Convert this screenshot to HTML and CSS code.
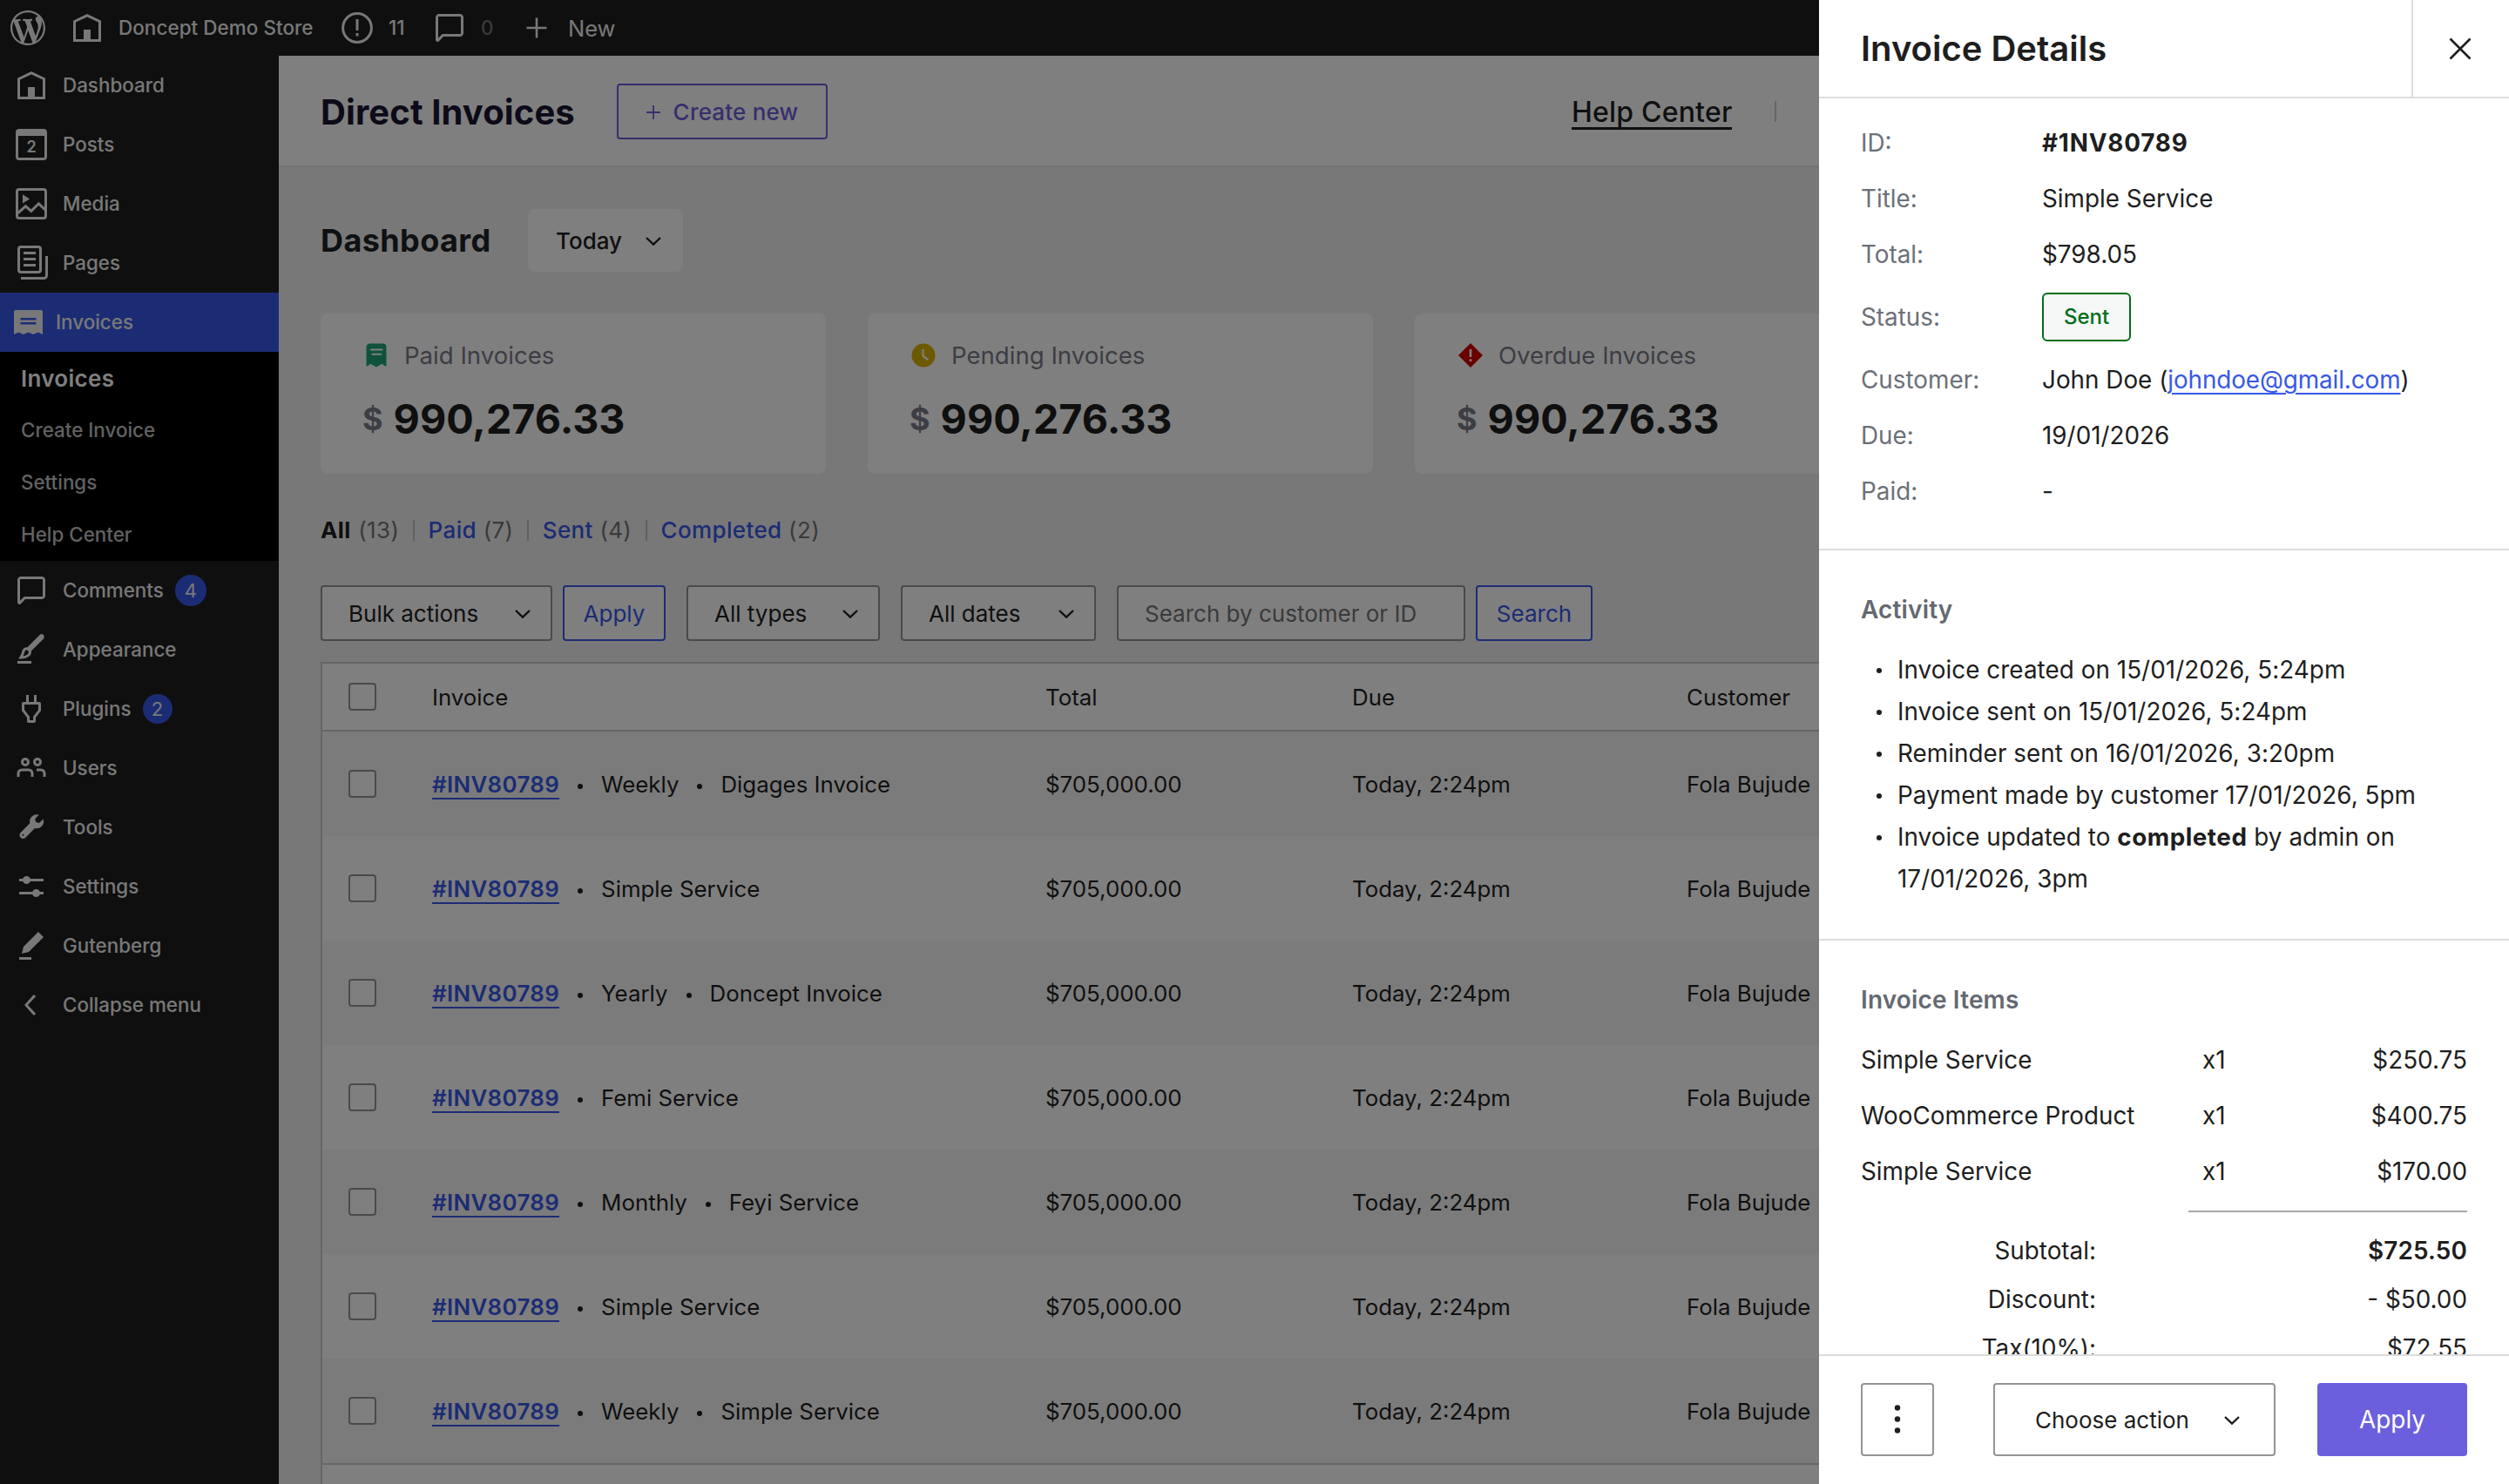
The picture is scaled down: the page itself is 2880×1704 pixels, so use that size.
FILE: index.html
```html
<!DOCTYPE html>
<html lang="en">
<head>
<meta charset="utf-8">
<title>Direct Invoices</title>
<link rel="stylesheet" href="styles.css">
</head>
<body>
<svg class="sprite" width="0" height="0" aria-hidden="true">
  <symbol id="i-home" viewBox="0 0 24 24"><path d="M12 4L4 7.9V20h16V7.9L12 4zm6.5 14.5H14V13h-4v5.5H5.5V8.8L12 5.7l6.5 3.1v9.7z"/></symbol>
  <symbol id="i-comment" viewBox="0 0 24 24"><path d="M18 4H6c-1.1 0-2 .9-2 2v12.9c0 .6.5 1.1 1.1 1.1.3 0 .5-.1.8-.3L8.5 17H18c1.1 0 2-.9 2-2V6c0-1.1-.9-2-2-2zm.5 11c0 .3-.2.5-.5.5H7.9l-2.4 2.4V6c0-.3.2-.5.5-.5h12c.3 0 .5.2.5.5v9z"/></symbol>
  <symbol id="i-chevron" viewBox="0 0 18 10"><path d="M1 1l8 7.6L17 1" fill="none" stroke="currentColor" stroke-width="2.4"/></symbol>
</svg>
<div class="app">
  <header class="topbar">
    <svg class="wp" viewBox="0 0 20 20"><path d="M20 10c0-5.51-4.49-10-10-10C4.48 0 0 4.49 0 10c0 5.52 4.48 10 10 10 5.51 0 10-4.48 10-10zM7.78 15.37L4.37 6.22c.55-.02 1.17-.08 1.17-.08.5-.06.44-1.13-.06-1.11 0 0-1.45.11-2.37.11-.18 0-.37 0-.58-.01C4.12 2.69 6.87 1.11 10 1.11c2.33 0 4.45.87 6.05 2.34-.68-.11-1.65.39-1.65 1.58 0 .74.45 1.36.9 2.1.35.61.55 1.36.55 2.46 0 1.49-1.4 5-1.4 5l-3.03-8.37c.54-.02.82-.17.82-.17.5-.05.44-1.25-.06-1.22 0 0-1.44.12-2.38.12-.87 0-2.33-.12-2.33-.12-.5-.03-.56 1.2-.06 1.22l.92.08 1.26 3.41zM17.41 10c.24-.64.74-1.87.43-4.25.7 1.29 1.05 2.71 1.05 4.25 0 3.29-1.73 6.24-4.4 7.78.97-2.59 1.94-5.2 2.92-7.78zM6.1 18.09C3.12 16.65 1.11 13.53 1.11 10c0-1.3.23-2.48.72-3.59C3.25 10.3 4.67 14.2 6.1 18.09zm4.03-6.63l2.58 6.98c-.86.29-1.76.45-2.71.45-.79 0-1.57-.11-2.29-.33.81-2.38 1.62-4.74 2.42-7.1z"/></svg>
    <svg class="icon"><use href="#i-home"/></svg>
    <span class="store">Doncept Demo Store</span>
    <svg class="notice" viewBox="0 0 36 36"><circle cx="18" cy="18" r="16.4" fill="none" stroke="currentColor" stroke-width="3"/><path d="M16.5 8h3v13h-3zM16.5 24h3v3.4h-3z"/></svg>
    <span class="count">11</span>
    <svg class="icon"><use href="#i-comment"/></svg>
    <span class="zero">0</span>
    <svg class="plus" viewBox="0 0 24 24"><path d="M12 .5v23M.5 12h23" stroke="currentColor" stroke-width="2.6"/></svg>
    <span class="new">New</span>
  </header>

  <div class="body">
    <nav class="sidebar">
      <a class="item"><svg class="icon"><use href="#i-home"/></svg>Dashboard</a>
      <a class="item"><svg class="icon" viewBox="0 0 24 24"><path fill-rule="evenodd" d="M5 3h14a2 2 0 0 1 2 2v14a2 2 0 0 1-2 2H5a2 2 0 0 1-2-2V5a2 2 0 0 1 2-2zm-.5 4v12c0 .3.2.5.5.5h14c.3 0 .5-.2.5-.5V7z"/><text class="day" x="12" y="16.4" text-anchor="middle">2</text></svg>Posts</a>
      <a class="item"><svg class="icon" viewBox="0 0 24 24"><rect x="3.75" y="3.75" width="16.5" height="16.5" rx="1.2" fill="none" stroke="currentColor" stroke-width="1.5"/><path d="M7 6.6v5.2l4-2.6z"/><path d="M4 17.6l4.7-4.2 3.2 2.8 4.3-4.3 4 3.8" fill="none" stroke="currentColor" stroke-width="1.5"/></svg>Media</a>
      <a class="item"><svg class="icon" viewBox="0 0 24 24"><path d="M14.5 5.5h-7V7h7V5.5ZM7.5 9h7v1.5h-7V9Zm7 3.5h-7V14h7v-1.5Z"/><path fill-rule="evenodd" d="M16 2H6a2 2 0 0 0-2 2v12a2 2 0 0 0 2 2h10a2 2 0 0 0 2-2V4a2 2 0 0 0-2-2ZM6 3.5h10a.5.5 0 0 1 .5.5v12a.5.5 0 0 1-.5.5H6a.5.5 0 0 1-.5-.5V4a.5.5 0 0 1 .5-.5Z"/><path d="M20 8v11c0 .69-.31 1-.999 1H6v1.5h13.001c1.52 0 2.499-.982 2.499-2.5V8H20Z"/></svg>Pages</a>
      <a class="item current"><svg class="receipt" viewBox="0 0 33 28"><path fill-rule="evenodd" d="M2 0h29a2 2 0 0 1 2 2v26l-5.500-2.500-5.500 2.500-5.500-2.500-5.500 2.500-5.500-2.500L0 28V2a2 2 0 0 1 2-2zM7.500 9v2.600h18V9zM7.500 14v2.600h18V14z"/></svg>Invoices</a>
      <div class="submenu">
        <a class="sub active">Invoices</a>
        <a class="sub">Create Invoice</a>
        <a class="sub">Settings</a>
        <a class="sub">Help Center</a>
      </div>
      <a class="item"><svg class="icon"><use href="#i-comment"/></svg>Comments<span class="pill wide">4</span></a>
      <a class="item"><svg class="icon" viewBox="0 0 24 24"><path d="M4 20h8v-1.5H4V20zM18.9 3.5c-.6-.6-1.5-.6-2.1 0l-7.2 7.2c-.4-.1-.7 0-1.1.1-.5.2-1.5.7-1.9 2.2-.4 1.7-.8 2.2-1.1 2.7-.1.1-.2.3-.3.4l-.6 1.1H6c2 0 3.4-.4 4.7-1.4.8-.6 1.2-1.4 1.3-2.3 0-.3 0-.5-.1-.7L19 5.700c.5-.6.5-1.600-.1-2.200zM9.700 14.700c-.7.5-1.500.8-2.400 1 .2-.5.5-1.200.8-2.300.2-.6.4-1 .8-1.100.5-.1 1 .1 1.300.3.2.2.3.5.2.8 0 .3-.1.9-.7 1.300z"/></svg>Appearance</a>
      <a class="item"><svg class="icon" viewBox="0 0 24 24"><path d="M10.500 4v4h3V4H15v4h1.500a1 1 0 011 1v4l-3 4v2a1 1 0 01-1 1h-3a1 1 0 01-1-1v-2l-3-4V9a1 1 0 011-1H9V4h1.500zm.5 12.500v2h2v-2l3-4v-3H8v3l3 4z"/></svg>Plugins<span class="pill">2</span></a>
      <a class="item"><svg class="icon" viewBox="0 0 24 24"><path fill-rule="evenodd" d="M15.500 9.500a1 1 0 100-2 1 1 0 000 2zm0 1.500a2.500 2.500 0 100-5 2.500 2.500 0 000 5zm-2.250 6v-2a2.750 2.750 0 00-2.750-2.750h-4A2.750 2.750 0 003.750 15v2h1.500v-2c0-.69.56-1.250 1.250-1.250h4c.69 0 1.250.56 1.250 1.250v2h1.500zm7-2v2h-1.500v-2c0-.69-.56-1.250-1.250-1.250H15v-1.500h2.500A2.750 2.750 0 0120.250 15zM9.500 8.500a1 1 0 11-2 0 1 1 0 012 0zm1.500 0a2.500 2.500 0 11-5 0 2.500 2.500 0 015 0z"/></svg>Users</a>
      <a class="item"><svg class="icon" viewBox="0 0 24 24"><path fill-rule="evenodd" d="M14.103 7.128l2.260-2.260a4 4 0 00-5.207 4.804L5.828 15a2 2 0 102.828 2.828l5.329-5.328a4 4 0 004.804-5.208l-2.261 2.260-1.912-.512-.513-1.912zm-7.214 9.640a.5.5 0 11.707-.707.5.5 0 01-.707.707z"/></svg>Tools</a>
      <a class="item"><svg class="icon" viewBox="0 0 24 24"><path d="m19 7.500h-7.628c-.3089-.87389-1.1423-1.500-2.122-1.500-.97966 0-1.81309.62611-2.12197 1.500h-2.12803v1.500h2.12803c.30888.87389 1.14231 1.500 2.12197 1.500.9797 0 1.8131-.62611 2.122-1.500h7.628z"/><path d="m19 15h-2.128c-.3089-.8739-1.1423-1.500-2.122-1.500s-1.8131.6261-2.122 1.500h-7.628v1.500h7.628c.3089.8739 1.1423 1.500 2.122 1.500s1.8131-.6261 2.122-1.500h2.128z"/></svg>Settings</a>
      <a class="item"><svg class="icon" viewBox="0 0 24 24"><path d="m19 7-3-3-8.500 8.500-1 4 4-1L19 7Zm-7 11.500H5V20h7v-1.500Z"/></svg>Gutenberg</a>
      <a class="item"><svg class="icon" viewBox="0 0 24 24"><path d="M14.600 7l-1.200-1L8 12l5.400 6 1.200-1-4.600-5z"/></svg>Collapse menu</a>
    </nav>

    <main class="main">
      <div class="pagehead">
        <h1>Direct Invoices</h1>
        <a class="create"><svg viewBox="0 0 16 16"><path d="M8 0v16M0 8h16" stroke="currentColor" stroke-width="1.800"/></svg>Create new</a>
        <div class="help"><a>Help Center</a><i></i></div>
      </div>
      <div class="content">
        <div class="dashhead">
          <h2>Dashboard</h2>
          <div class="today">Today<svg class="chev"><use href="#i-chevron"/></svg></div>
        </div>
        <div class="cards">
          <div class="card">
            <div class="label"><svg viewBox="-2 -2 32 32"><path fill="#1fa577" d="M7 .5h14.500a4 4 0 0 1 4 4v22l-2.400-.4-2.300-2.300-4 2-2.800 1.700-3-1.700-4-2-2.200 2.300-2.300.4v-22a4 4 0 0 1 4.500-4z"/><path d="M8 7.400h12.500M9.300 12.700h10" stroke="#fff" stroke-width="2" stroke-linecap="round"/></svg>Paid Invoices</div>
            <div class="amount"><span>$</span>990,276.33</div>
          </div>
          <div class="card">
            <div class="label"><svg viewBox="-2 -2 32 32"><circle cx="14" cy="14" r="13.500" fill="#dbb400"/><path d="M13.500 7v8l6 4" fill="none" stroke="#fff" stroke-width="2.200"/></svg>Pending Invoices</div>
            <div class="amount"><span>$</span>990,276.33</div>
          </div>
          <div class="card">
            <div class="label"><svg viewBox="-2 -2 32 32"><path fill="#d00000" d="M14 0l14 14-14 14L0 14z"/><path d="M14 7v9M14 18.300v2.700" stroke="#fff" stroke-width="2.600"/></svg>Overdue Invoices</div>
            <div class="amount"><span>$</span>990,276.33</div>
          </div>
          <div class="card"></div>
        </div>
        <div class="filters">
          <span><b>All</b> (13)</span><i></i><span><a>Paid</a> (7)</span><i></i><span><a>Sent</a> (4)</span><i></i><span><a>Completed</a> (2)</span>
        </div>
        <div class="controls">
          <div class="select bulk">Bulk actions<svg class="chev"><use href="#i-chevron"/></svg></div>
          <a class="btn apply">Apply</a>
          <div class="select types">All types<svg class="chev"><use href="#i-chevron"/></svg></div>
          <div class="select dates">All dates<svg class="chev"><use href="#i-chevron"/></svg></div>
          <div class="select search">Search by customer or ID</div>
          <a class="btn find">Search</a>
        </div>
        <div class="table">
          <div class="row head"><i class="check"></i><div>Invoice</div><div>Total</div><div>Due</div><div>Customer</div></div>
          <div class="row odd"><i class="check"></i><div class="inv"><a>#INV80789</a><i></i>Weekly<i></i>Digages Invoice</div><div>$705,000.00</div><div>Today, 2:24pm</div><div>Fola Bujude</div></div>
          <div class="row"><i class="check"></i><div class="inv"><a>#INV80789</a><i></i>Simple Service</div><div>$705,000.00</div><div>Today, 2:24pm</div><div>Fola Bujude</div></div>
          <div class="row odd"><i class="check"></i><div class="inv"><a>#INV80789</a><i></i>Yearly<i></i>Doncept Invoice</div><div>$705,000.00</div><div>Today, 2:24pm</div><div>Fola Bujude</div></div>
          <div class="row"><i class="check"></i><div class="inv"><a>#INV80789</a><i></i>Femi Service</div><div>$705,000.00</div><div>Today, 2:24pm</div><div>Fola Bujude</div></div>
          <div class="row odd"><i class="check"></i><div class="inv"><a>#INV80789</a><i></i>Monthly<i></i>Feyi Service</div><div>$705,000.00</div><div>Today, 2:24pm</div><div>Fola Bujude</div></div>
          <div class="row"><i class="check"></i><div class="inv"><a>#INV80789</a><i></i>Simple Service</div><div>$705,000.00</div><div>Today, 2:24pm</div><div>Fola Bujude</div></div>
          <div class="row odd"><i class="check"></i><div class="inv"><a>#INV80789</a><i></i>Weekly<i></i>Simple Service</div><div>$705,000.00</div><div>Today, 2:24pm</div><div>Fola Bujude</div></div>
          <div class="tfoot"></div>
        </div>
      </div>
    </main>
  </div>
</div>

<div class="scrim"></div>

<aside class="panel">
  <header class="phead">
    <h2>Invoice Details</h2>
    <a class="close"><svg viewBox="0 0 26 26"><path d="M1.500 1.500l23 23M24.500 1.500l-23 23" stroke="currentColor" stroke-width="2.600"/></svg></a>
  </header>
  <div class="pbody">
    <dl class="details">
      <dt>ID:</dt><dd><b>#1NV80789</b></dd>
      <dt>Title:</dt><dd>Simple Service</dd>
      <dt>Total:</dt><dd>$798.05</dd>
      <dt>Status:</dt><dd><span class="badge">Sent</span></dd>
      <dt>Customer:</dt><dd>John Doe (<a>johndoe@gmail.com</a>)</dd>
      <dt>Due:</dt><dd>19/01/2026</dd>
      <dt>Paid:</dt><dd>-</dd>
    </dl>
    <section class="activity">
      <h3>Activity</h3>
      <ul>
        <li>Invoice created on 15/01/2026, 5:24pm</li>
        <li>Invoice sent on 15/01/2026, 5:24pm</li>
        <li>Reminder sent on 16/01/2026, 3:20pm</li>
        <li>Payment made by customer 17/01/2026, 5pm</li>
        <li>Invoice updated to <b>completed</b> by admin on 17/01/2026, 3pm</li>
      </ul>
    </section>
    <section class="items">
      <h3>Invoice Items</h3>
      <div class="line"><span>Simple Service</span><span>x1</span><span>$250.75</span></div>
      <div class="line"><span>WooCommerce Product</span><span>x1</span><span>$400.75</span></div>
      <div class="line"><span>Simple Service</span><span>x1</span><span>$170.00</span></div>
      <hr>
      <div class="sum"><span>Subtotal:</span><b>$725.50</b></div>
      <div class="sum"><span>Discount:</span><span>- $50.00</span></div>
      <div class="sum"><span>Tax(10%):</span><span>$72.55</span></div>
    </section>
  </div>
  <footer class="pfoot">
    <a class="kebab"><svg viewBox="0 0 84 84"><circle cx="42" cy="28.500" r="3.200"/><circle cx="42" cy="41.500" r="3.200"/><circle cx="42" cy="54.500" r="3.200"/></svg></a>
    <div class="choose">Choose action<svg class="chev"><use href="#i-chevron"/></svg></div>
    <a class="go">Apply</a>
  </footer>
</aside>
</body>
</html>
```
FILE: styles.css
```css
* { box-sizing: border-box; margin: 0; padding: 0; }
body {
  width: 2880px; height: 1704px; overflow: hidden; position: relative;
  font-family: Inter, "Liberation Sans", sans-serif; font-size: 26px; line-height: 1;
  color: #1e1e1e; white-space: nowrap;
}
svg { display: block; flex: none; fill: currentColor; }
.sprite { position: absolute; }
i { font-style: normal; }
.icon { width: 48px; height: 48px; }
.chev { width: 18px; height: 10px; }

.app { height: 100%; display: flex; flex-direction: column; }
.topbar {
  height: 64px; flex: none; display: flex; align-items: center;
  padding-left: 12px; background: #1e1e1e; color: #f0f0f0; font-size: 22.4px; font-weight: 500; line-height: 24px;
}
.wp { width: 40px; height: 40px; margin-right: 24px; }
.store { width: 268px; padding-left: 12px; letter-spacing: .08px; }
.notice { width: 36px; height: 36px; }
.count { width: 64px; padding-left: 18px; }
.zero { width: 64px; padding-left: 12px; color: #757575; }
.plus { width: 24px; height: 24px; }
.new { margin: 2px 0 0 24px; font-size: 25.5px; font-weight: 400; }

.body { flex: 1; min-height: 0; display: flex; }
.sidebar { width: 320px; flex: none; background: #1e1e1e; color: #f0f0f0; line-height: 24px; }
.item {
  height: 68px; display: flex; align-items: center; gap: 12px; padding-left: 12px;
  font-size: 22.4px; font-weight: 500;
}
.day { font-size: 9px; font-weight: 600; }
.current { background: #3858e9; padding-left: 16px; gap: 15px; }
.receipt { width: 33px; height: 28px; }
.submenu { background: #000; height: 240px; }
.sub { display: flex; align-items: center; height: 60px; padding-left: 24px; font-size: 22.4px; color: #c4c4c4; font-weight: 500; }
.sub.active { font-size: 26px; font-weight: 600; color: #fff; padding-top: 2px; letter-spacing: .3px; }
.pill {
  width: 34px; height: 34px; border-radius: 17px; background: #3858e9; margin-left: 1px;
  display: flex; align-items: center; justify-content: center; font-size: 22px; font-weight: 400;
}
.wide { width: 36px; height: 36px; border-radius: 18px; }

.main { flex: 1; min-width: 0; background: #f0f0f0; display: flex; flex-direction: column; }
.pagehead {
  height: 128px; flex: none; background: #fff; border-bottom: 2px solid #e8e8e8;
  display: flex; align-items: center; padding: 2px 0 0 48px;
}
h1 { width: 340px; font-size: 40px; font-weight: 700; color: #1b1433; letter-spacing: .1px; padding-top: 1px; }
.create {
  width: 242px; height: 64px; border: 2px solid #6c5fdd; border-radius: 4px; color: #6c5fdd; padding-top: 1px;
  display: flex; align-items: center; justify-content: center; gap: 15px; font-weight: 500; letter-spacing: .2px;
}
.create svg { width: 16px; height: 16px; }
.help { margin-left: 854px; display: flex; align-items: center; gap: 49px; font-size: 32px; font-weight: 500; }
.help a { border-bottom: 3px solid #1e1e1e; line-height: 34px; padding-top: 4px; letter-spacing: .2px; }
.help i { width: 2px; height: 24px; background: #ccc; }

.content { padding: 48px 48px 0; display: flex; flex-direction: column; }
.dashhead { display: flex; align-items: center; gap: 38px; height: 72px; }
h2 { font-size: 36px; font-weight: 600; color: #1d2327; }
.dashhead h2 { width: 200px; font-weight: 700; letter-spacing: .4px; }
.today {
  width: 178px; height: 72px; padding: 2px 25px 0 32px; border-radius: 8px; background: #fff;
  display: flex; align-items: center; justify-content: space-between; font-weight: 500;
}
.cards { display: grid; grid-template-columns: repeat(4, 1fr); gap: 48px; margin-top: 48px; }
.card { height: 184px; border-radius: 8px; background: #fff; padding: 32px 48px; }
.label { display: flex; align-items: center; gap: 16px; height: 32px; font-size: 27.6px; line-height: 28px; color: #7b7b88; }
.label svg { width: 32px; height: 32px; }
.amount { display: flex; align-items: center; gap: 12px; margin-top: 33px; height: 48px; font-size: 46.7px; font-weight: 700; }
.amount span { font-size: 36px; color: #7b7b88; }
.filters { display: flex; align-items: center; gap: 15.700px; height: 32px; margin-top: 49px; color: #757575; letter-spacing: .35px; }
.filters i { width: 2px; height: 24px; background: #c3c3c3; }
.filters b { font-weight: 700; color: #1e1e1e; margin-right: 1px; }
.filters a { font-weight: 500; color: #3858e9; }
.controls { display: flex; height: 64px; margin-top: 47px; }
.select, .btn {
  border: 2px solid #949494; border-radius: 4px; background: #fff;
  display: flex; align-items: center; justify-content: space-between; padding: 2px 23px 0 30px;
}
.bulk { width: 266px; }
.types { width: 222px; margin-left: 24px; }
.dates { width: 224px; margin-left: 24px; }
.search { width: 400px; margin-left: 24px; color: #757575; }
.btn { border-color: #3858e9; color: #3858e9; margin-left: 12px; padding: 2px 0 0; justify-content: center; }
.apply { width: 118px; }
.find { width: 134px; }

.table { margin-top: 24px; border: 2px solid #ccc; border-bottom: 0; background: #fff; font-size: 25.85px; }
.row {
  height: 120px; display: grid; align-items: center; padding-left: 30px;
  grid-template-columns: 96px 704px 352px 384px 1fr;
}
.row > div { padding-top: 2px; }
.row.head { height: 78px; border-bottom: 2px solid #ccc; }
.odd { background: #f6f6f6; }
.check { width: 32px; height: 32px; border: 2px solid #949494; border-radius: 4px; background: #fff; }
.inv { display: flex; align-items: center; }
.inv a { color: #3858e9; font-weight: 600; border-bottom: 2px solid #3858e9; padding: 4px 0 2px; letter-spacing: .35px; }
.inv i { width: 6px; height: 6px; border-radius: 3px; background: #1e1e1e; margin: 3px 21px 0; }
.tfoot { height: 24px; border-top: 2px solid #ccc; }

.scrim { position: absolute; inset: 0; background: rgba(0, 0, 0, .5); }

.panel {
  position: absolute; top: 0; right: 0; width: 792px; height: 1704px; background: #fff;
  display: flex; flex-direction: column; font-size: 27.85px; line-height: 28px;
}
.phead { height: 113px; flex: none; border-bottom: 2px solid #dcdcdc; display: flex; align-items: stretch; padding-left: 48px; }
.phead h2 { flex: 1; font-size: 40px; line-height: 111px; color: #1e1e1e; }
.close { width: 112px; border-left: 2px solid #dcdcdc; display: flex; align-items: center; justify-content: center; padding-right: 2px; }
.close svg { width: 26px; height: 26px; }
.pbody { flex: 1; min-height: 0; overflow: hidden; }
.details {
  display: grid; grid-template-columns: 208px 1fr; align-items: center;
  grid-template-rows: 64px 64px 64px 80px 64px 64px 64px;
  height: 519px; padding: 19px 48px 0; border-bottom: 2px solid #dcdcdc; align-content: start;
}
.details dt { color: #6c7078; }
.details a { color: #3858e9; text-decoration: underline; text-decoration-thickness: 2px; text-underline-offset: 5px; letter-spacing: -.1px; }
.details b { font-weight: 700; letter-spacing: .8px; }
.sum b { font-weight: 600; letter-spacing: .15px; }
.badge {
  width: 102px; height: 56px; border: 2px solid #006d19; border-radius: 6px; background: #f6f7f7; color: #006d19;
  display: flex; align-items: center; justify-content: center; font-size: 24px; font-weight: 500;
}
.activity { height: 448px; padding: 44px 48px 0; border-bottom: 2px solid #dcdcdc; }
h3 { font-size: 28px; line-height: 48px; font-weight: 600; color: #646970; letter-spacing: .15px; }
.activity ul { list-style: none; margin-top: 21px; white-space: normal; }
.activity li { line-height: 48px; padding-left: 42px; position: relative; letter-spacing: .04px; }
.activity li::before {
  content: ""; position: absolute; left: 18px; top: 22px; width: 6px; height: 6px; border-radius: 3px; background: #1e1e1e;
}
.activity b { font-weight: 700; letter-spacing: .5px; }
.items { padding: 44px 48px 0; }
.line { display: grid; grid-template-columns: 392px 1fr auto; align-items: center; height: 64px; }
.items h3 { margin-bottom: 13px; }
.items hr { border: 0; height: 2px; width: 320px; margin: 13px 0 16px auto; background: #a7aaad; }
.sum { height: 56px; display: grid; grid-template-columns: 270px 1fr; align-items: center; text-align: right; }
.pfoot { height: 149px; flex: none; border-top: 2px solid #dcdcdc; padding: 31px 48px 0; display: flex; background: #fff; }
.kebab, .choose { height: 84px; border: 2px solid #949494; border-radius: 4px; }
.kebab { width: 84px; }
.kebab svg { margin: -2px; width: 84px; height: 84px; }
.choose {
  width: 324px; margin-left: 68px; padding: 1px 39px 0 46px; font-size: 26px;
  display: flex; align-items: center; justify-content: space-between;
}
.go {
  width: 172px; height: 84px; margin-left: 48px; border-radius: 4px; background: #6c5fdd; color: #fff;
  display: flex; align-items: center; justify-content: center;
}
```
